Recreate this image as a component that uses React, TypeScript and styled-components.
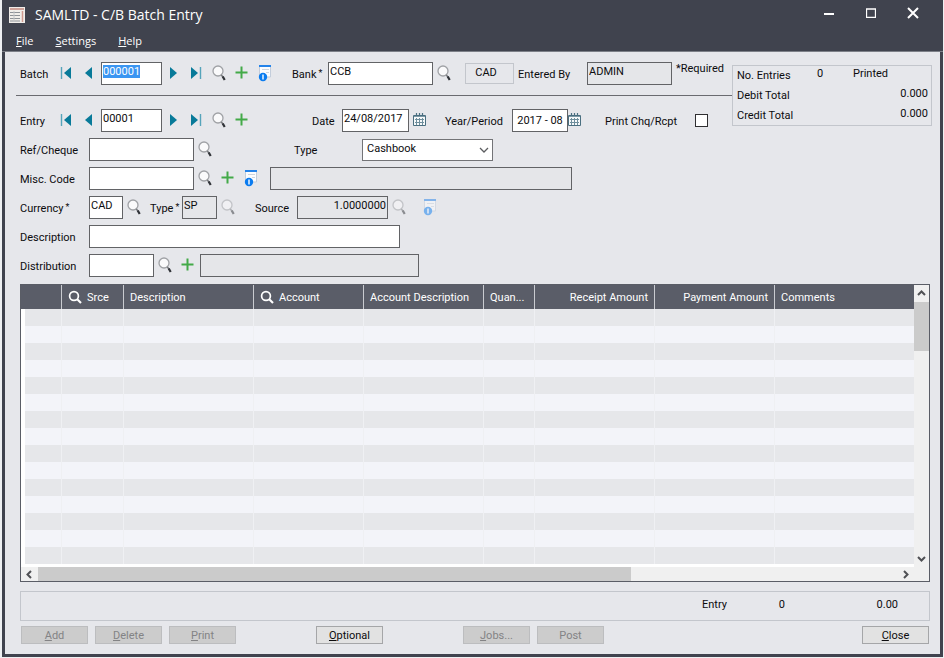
import React, { useEffect, useRef } from 'react';
import styled, { createGlobalStyle } from 'styled-components';

const Global = createGlobalStyle`
  * { box-sizing: border-box; }
  body {
    margin: 0;
    background: #eef0f2;
    color: #0c0c0e;
    font: 11px/14px Roboto, "Liberation Sans", sans-serif;
  }
  button, input, select { font: inherit; color: inherit; margin: 0; }
`;

const Window = styled.div`
  margin: 0 1px 0 2px;
  background: #e6e7eb;
  border: solid #40434e;
  border-width: 0 3px 3px;
`;

const Chrome = styled.header`
  background: #40434e;
  color: #fff;
  margin: 0 -3px;
  border-bottom: 1px solid #7d8088;
  font-family: "Open Sans", "Noto Sans", sans-serif;
`;

const TitleBar = styled.div`
  display: flex;
  align-items: center;
  height: 29px;
  padding: 0 16px 0 7px;
`;

const Title = styled.h1`
  flex: 1;
  margin: 0 0 0 10px;
  font-size: 14px;
  line-height: 20px;
  font-weight: 400;
`;

const CaptionButton = styled.button`
  display: flex;
  align-items: center;
  justify-content: center;
  width: 42px;
  height: 22px;
  padding: 0 0 4px;
  border: 0;
  background: none;
  &:last-child { width: 28px; margin-left: 7px; }
`;

const MenuBar = styled.nav`
  display: flex;
  gap: 22px;
  height: 22px;
  padding: 1px 14px 0;
`;

const MenuItem = styled.button`
  padding: 0;
  border: 0;
  background: none;
  font-size: 11px;
  line-height: 18px;
`;

const Body = styled.main`
  padding: 0 10px 10px 15px;
`;

const Top = styled.div`
  display: flex;
  align-items: flex-start;
  margin: 0 -2px 6px -4px;
`;

const TopFields = styled.div`
  flex: 1;
  padding-top: 10px;
`;

const Row = styled.div`
  display: flex;
  align-items: center;
  height: 23px;
  padding-left: 4px;
  white-space: nowrap;
`;

const Rule = styled.hr`
  margin: 10px 0 13px;
  border: 0;
  border-top: 1px solid #6a6b70;
`;

const Fields = styled.div`
  display: grid;
  gap: 6px;
  margin-left: -4px;
`;

const Label = styled.label<{ $w: number; $ml?: number }>`
  flex: none;
  width: ${p => p.$w}px;
  margin-left: ${p => p.$ml ?? 0}px;
  padding-top: 2px;
  sup { font-size: 9px; line-height: 1px; margin-left: 2px; vertical-align: 2px; }
`;

const Field = styled.input<{ $w: number; $ml?: number; $middle?: boolean; $right?: boolean }>`
  flex: none;
  width: ${p => p.$w}px;
  height: 23px;
  margin-left: ${p => p.$ml ?? 0}px;
  padding: ${p => (p.$middle ? '0 3px' : '0 1px 4px')};
  border: 1px solid #626366;
  border-radius: 0;
  outline: none;
  background: #fff;
  text-align: ${p => (p.$right ? 'right' : p.$middle ? 'center' : 'left')};
  &:read-only { background: #e5e6e9; }
  &::selection { background: #3b96f2; color: #fff; }
`;

const CurrencyTag = styled.output`
  flex: none;
  width: 49px;
  height: 21px;
  margin: 0 4px 0 9px;
  border: 1px solid #c3c6cc;
  line-height: 18px;
  text-align: center;
  padding-right: 7px;
`;

const Required = styled.span`
  align-self: flex-start;
  margin-left: 4px;
`;

const IconButton = styled.button<{ $narrow?: boolean; $ml?: number }>`
  flex: none;
  display: flex;
  align-items: center;
  justify-content: center;
  width: ${p => (p.$narrow ? 15 : 23)}px;
  height: 23px;
  margin-left: ${p => p.$ml ?? 0}px;
  padding: 0 2px 2px 0;
  border: 0;
  background: none;
  &:disabled { opacity: 0.5; }
  svg { flex: none; }
`;

const Check = styled.input`
  appearance: none;
  width: 13px;
  height: 13px;
  margin: 0;
  border: 1px solid #2f2f31;
  background: #fff;
`;

const SelectBox = styled.span`
  position: relative;
  display: flex;
  svg { position: absolute; right: 4px; top: 8px; pointer-events: none; }
`;

const Select = styled.select`
  appearance: none;
  width: 131px;
  height: 22px;
  padding: 0 20px 1px 4px;
  border: 1px solid #737477;
  border-radius: 0;
  background: #fff;
`;

const Totals = styled.section`
  flex: none;
  display: grid;
  grid-template-columns: 76px 40px 1fr;
  grid-template-rows: 20px 20px 18px;
  width: 200px;
  margin-top: 13px;
  padding: 1px 3px 0 4px;
  border: 1px solid #c3c6cc;
`;

const TotalName = styled.span`
  padding-top: 2px;
`;

const TotalCount = styled.span`
  padding-left: 4px;
`;

const TotalValue = styled.span`
  grid-column: 2 / 4;
  text-align: right;
`;

const GridFrame = styled.section`
  display: grid;
  grid-template-columns: 1fr 15px;
  margin-top: 7px;
  border: 1px solid #5a5d66;
  background: #fff;
`;

const Table = styled.table`
  width: 100%;
  table-layout: fixed;
  border-collapse: separate;
  border-spacing: 0;
  margin-bottom: 3px;
`;

const Th = styled.th<{ $right?: boolean }>`
  height: 24px;
  padding: 1px 6px 0;
  background: #5a5d68;
  color: #fff;
  font-weight: 400;
  text-align: ${p => (p.$right ? 'right' : 'left')};
  white-space: nowrap;
  overflow: hidden;
  & + & { border-left: 1px solid #c9cbd0; }
  svg { vertical-align: -3px; margin-right: 5px; }
`;

const Tr = styled.tr`
  background: #f3f4f9;
  &:nth-child(odd) { background: #e6e7ea; }
`;

const Td = styled.td`
  height: 17px;
  padding: 0;
  &:first-child { border-left: 4px solid #fff; }
  & + & { border-left: 1px solid #eff0f3; }
`;

const VScroll = styled.div`
  display: flex;
  flex-direction: column;
  align-items: center;
  background: #f0f0f0;
`;

const VThumb = styled.div`
  width: 100%;
  height: 49px;
  margin-bottom: auto;
  background: #cbcbcb;
`;

const HScroll = styled.div`
  grid-column: 1 / 3;
  display: grid;
  grid-template-columns: 17px 1fr 32px;
  background: #f0f0f0;
`;

const HThumb = styled.div`
  width: 69%;
  height: 14px;
  background: #cbcbcb;
`;

const Arrow = styled.button<{ $side?: boolean }>`
  flex: none;
  display: flex;
  align-items: center;
  justify-content: center;
  width: ${p => (p.$side ? 17 : 15)}px;
  height: ${p => (p.$side ? 14 : 17)}px;
  padding: 0;
  border: 0;
  background: #f0f0f0;
`;

const Summary = styled.section`
  display: flex;
  justify-content: flex-end;
  height: 30px;
  margin: 9px 0 5px;
  padding: 6px 31px 0 0;
  border: 1px solid #c3c6cc;
`;

const SummaryCell = styled.span<{ $w: number }>`
  width: ${p => p.$w}px;
  text-align: right;
  &:first-child { text-align: left; }
`;

const Buttons = styled.div`
  display: flex;
  gap: 7px;
  padding: 0 1px;
`;

const Push = styled.button<{ $ml?: number; $end?: boolean }>`
  width: 67px;
  height: 18px;
  margin-left: ${p => (p.$end ? 'auto' : `${p.$ml ?? 0}px`)};
  padding: 1px 0 0;
  border: 1px solid #a5a6a8;
  background: #e2e2e2;
  line-height: 14px;
  &:disabled { border-color: #bcbdbf; background: #cccccc; color: #838385; }
`;

const First = () => (
  <svg width="12" height="12"><path d="M1.5 0v12" stroke="#55a4ba" strokeWidth="1.4" /><path d="M11 0v12L4 6z" fill="#087a99" /></svg>
);
const Prev = () => <svg width="10" height="12"><path d="M8 0v12L1 6z" fill="#087a99" /></svg>;
const Next = () => <svg width="10" height="12"><path d="M2 0v12l7-6z" fill="#087a99" /></svg>;
const Last = () => (
  <svg width="12" height="12"><path d="M10.5 0v12" stroke="#55a4ba" strokeWidth="1.4" /><path d="M1 0v12l7-6z" fill="#087a99" /></svg>
);
const Lens = () => (
  <svg width="16" height="18" fill="none">
    <circle cx="7" cy="7" r="5" fill="#fafafb" stroke="#a0a2a6" strokeWidth="1.3" />
    <path d="M10.3 11l2 2.500" stroke="#77797d" strokeWidth="1.5" />
    <path d="M11.700 12.500l2 3.500" stroke="#303338" strokeWidth="2.200" />
  </svg>
);
const Plus = () => <svg width="13" height="13"><path d="M6.5 .5v12M.5 6.5h12" stroke="#43aa48" strokeWidth="2" /></svg>;
const Info = () => (
  <svg width="14" height="18">
    <path d="M1.5 2.500h11v10.500h-11z" fill="#fbfcfe" stroke="#c3cddb" />
    <path d="M1 1h12v2H1z" fill="#2483ea" />
    <path d="M4 5.500h7M8 8.500h3" stroke="#ccd4df" />
    <circle cx="5" cy="13" r="4.200" fill="#0b7cf0" />
    <path d="M5 10.500v5" stroke="#fff" strokeWidth="1.4" />
  </svg>
);
const Calendar = () => (
  <svg width="13" height="13" fill="none" stroke="#4a6f80">
    <path d="M.5 2.500h12v10H.5z" fill="#f6f9fa" />
    <path d="M1 3h11" strokeWidth="1.400" />
    <path d="M3.5 0v3M6.5 0v3M9.5 0v3" strokeWidth="1.200" />
    <path d="M2 6.500h9M2 9.500h9M3.5 5v7M6.5 5v7M9.5 5v7" stroke="#6f8f9d" />
  </svg>
);
const HeadLens = () => (
  <svg width="14" height="14" fill="none" stroke="#fff"><circle cx="6" cy="6" r="4.400" strokeWidth="1.700" /><path d="M9 9l4 4" strokeWidth="2.200" /></svg>
);
const arrows = { up: 'M1 6l3.500-3.500L8 6', down: 'M1 3l3.500 3.500L8 3', left: 'M6 1L2.500 4.500 6 8', right: 'M3 1l3.500 3.500L3 8' };
const Chevron = ({ to }: { to: keyof typeof arrows }) => (
  <svg width="9" height="9" fill="none"><path d={arrows[to]} stroke="#505155" strokeWidth="2" /></svg>
);

const nav = [['First', First], ['Previous', Prev]] as const;
const navAfter = [['Next', Next], ['Last', Last], ['Find', Lens], ['New', Plus]] as const;

const columns: { name: string; w?: number; right?: boolean; lens?: boolean }[] = [
  { name: '', w: 40 },
  { name: 'Srce', w: 62, lens: true },
  { name: 'Description', w: 130 },
  { name: 'Account', w: 110, lens: true },
  { name: 'Account Description', w: 120 },
  { name: 'Quan...', w: 51 },
  { name: 'Receipt Amount', w: 120, right: true },
  { name: 'Payment Amount', w: 120, right: true },
  { name: 'Comments' },
];

export default function App() {
  const batch = useRef<HTMLInputElement>(null);
  useEffect(() => {
    batch.current?.focus();
    batch.current?.select();
  }, []);

  return (
    <>
      <Global />
      <Window>
        <Chrome>
          <TitleBar>
            <svg width="16" height="16">
              <path d="M0 0h16v16H0z" fill="#f1eeea" />
              <path d="M1 2h14" stroke="#c58a7f" strokeWidth="1.5" />
              <path d="M1 5.500h10M1 8.500h10M1 11.500h10M1 14h10" stroke="#8e9297" />
              <path d="M13.5 4v11" stroke="#d09a8f" strokeWidth="1.500" />
              <path d="M5 4v11" stroke="#c4c6c8" />
            </svg>
            <Title>SAMLTD - C/B Batch Entry</Title>
            <CaptionButton aria-label="Minimize"><svg width="10" height="10"><path d="M0 6h10" stroke="#fff" strokeWidth="2" /></svg></CaptionButton>
            <CaptionButton aria-label="Maximize"><svg width="10" height="10"><path d="M.5 1h9v8.500h-9z" fill="none" stroke="#fff" strokeWidth="1.3" /></svg></CaptionButton>
            <CaptionButton aria-label="Close window"><svg width="12" height="12"><path d="M1 1l10 10M11 1L1 11" stroke="#fff" strokeWidth="2" /></svg></CaptionButton>
          </TitleBar>
          <MenuBar>
            <MenuItem><u>F</u>ile</MenuItem>
            <MenuItem><u>S</u>ettings</MenuItem>
            <MenuItem><u>H</u>elp</MenuItem>
          </MenuBar>
        </Chrome>
        <Body>
          <Top>
            <TopFields>
              <Row>
                <Label $w={35} htmlFor="batch">Batch</Label>
                {nav.map(([n, I]) => <IconButton key={n} aria-label={`${n} batch`}><I /></IconButton>)}
                <Field id="batch" ref={batch} $w={61} defaultValue="000001" />
                {navAfter.map(([n, I]) => <IconButton key={n} aria-label={`${n} batch`}><I /></IconButton>)}
                <IconButton aria-label="Batch information"><Info /></IconButton>
                <Label $w={36} $ml={15} htmlFor="bank">Bank<sup>*</sup></Label>
                <Field id="bank" $w={105} defaultValue="CCB" />
                <IconButton aria-label="Find bank"><Lens /></IconButton>
                <CurrencyTag>CAD</CurrencyTag>
                <Label $w={69} htmlFor="by">Entered By</Label>
                <Field id="by" $w={85} readOnly value="ADMIN" />
                <Required>*Required</Required>
              </Row>
              <Rule />
              <Row>
                <Label $w={35} htmlFor="entry">Entry</Label>
                {nav.map(([n, I]) => <IconButton key={n} aria-label={`${n} entry`}><I /></IconButton>)}
                <Field id="entry" $w={61} defaultValue="00001" />
                {navAfter.map(([n, I]) => <IconButton key={n} aria-label={`${n} entry`}><I /></IconButton>)}
                <Label $w={30} $ml={58} htmlFor="date">Date</Label>
                <Field id="date" $w={67} defaultValue="24/08/2017" />
                <IconButton aria-label="Pick date"><Calendar /></IconButton>
                <Label $w={67} $ml={13} htmlFor="period">Year/Period</Label>
                <Field id="period" $w={56} $middle defaultValue="2017 - 08" />
                <IconButton $narrow aria-label="Pick period"><Calendar /></IconButton>
                <Label $w={90} $ml={22} htmlFor="chq">Print Chq/Rcpt</Label>
                <Check id="chq" type="checkbox" />
              </Row>
            </TopFields>
            <Totals>
              <TotalName>No. Entries</TotalName><TotalCount>0</TotalCount><span>Printed</span>
              <TotalName>Debit Total</TotalName><TotalValue>0.000</TotalValue>
              <TotalName>Credit Total</TotalName><TotalValue>0.000</TotalValue>
            </Totals>
          </Top>
          <Fields>
            <Row>
              <Label $w={69} htmlFor="ref">Ref/Cheque</Label>
              <Field id="ref" $w={105} />
              <IconButton aria-label="Find reference"><Lens /></IconButton>
              <Label $w={68} $ml={77} htmlFor="type">Type</Label>
              <SelectBox>
                <Select id="type"><option>Cashbook</option></Select>
                <svg width="10" height="7" fill="none"><path d="M1 1l4 4 4-4" stroke="#5c5d60" strokeWidth="1.3" /></svg>
              </SelectBox>
            </Row>
            <Row>
              <Label $w={69} htmlFor="misc">Misc. Code</Label>
              <Field id="misc" $w={105} />
              <IconButton aria-label="Find code"><Lens /></IconButton>
              <IconButton aria-label="New code"><Plus /></IconButton>
              <IconButton aria-label="Code information"><Info /></IconButton>
              <Field aria-label="Code name" $w={302} $ml={7} readOnly />
            </Row>
            <Row>
              <Label $w={69} htmlFor="cur">Currency<sup>*</sup></Label>
              <Field id="cur" $w={34} defaultValue="CAD" />
              <IconButton aria-label="Find currency"><Lens /></IconButton>
              <Label $w={32} $ml={4} htmlFor="rate">Type<sup>*</sup></Label>
              <Field id="rate" $w={35} readOnly value="SP" />
              <IconButton disabled aria-label="Find rate type"><Lens /></IconButton>
              <Label $w={42} $ml={15} htmlFor="source">Source</Label>
              <Field id="source" $w={91} $right readOnly value="1.0000000" />
              <IconButton disabled aria-label="Find source"><Lens /></IconButton>
              <IconButton $ml={8} disabled aria-label="Rate information"><Info /></IconButton>
            </Row>
            <Row>
              <Label $w={69} htmlFor="desc">Description</Label>
              <Field id="desc" $w={311} />
            </Row>
            <Row>
              <Label $w={69} htmlFor="dist">Distribution</Label>
              <Field id="dist" $w={65} />
              <IconButton aria-label="Find distribution"><Lens /></IconButton>
              <IconButton aria-label="New distribution"><Plus /></IconButton>
              <Field aria-label="Distribution name" $w={219} readOnly />
            </Row>
          </Fields>
          <GridFrame>
            <Table>
              <colgroup>{columns.map(c => <col key={c.name} width={c.w} />)}</colgroup>
              <thead>
                <tr>
                  {columns.map(c => <Th key={c.name} $right={c.right}>{c.lens && <HeadLens />}{c.name}</Th>)}
                </tr>
              </thead>
              <tbody>
                {Array.from({ length: 15 }, (_, r) => (
                  <Tr key={r}>{columns.map(c => <Td key={c.name} />)}</Tr>
                ))}
              </tbody>
            </Table>
            <VScroll>
              <Arrow aria-label="Scroll up"><Chevron to="up" /></Arrow>
              <VThumb />
              <Arrow aria-label="Scroll down"><Chevron to="down" /></Arrow>
            </VScroll>
            <HScroll>
              <Arrow $side aria-label="Scroll left"><Chevron to="left" /></Arrow>
              <HThumb />
              <Arrow $side aria-label="Scroll right"><Chevron to="right" /></Arrow>
            </HScroll>
          </GridFrame>
          <Summary>
            <SummaryCell $w={50}>Entry</SummaryCell>
            <SummaryCell $w={33}>0</SummaryCell>
            <SummaryCell $w={113}>0.00</SummaryCell>
          </Summary>
          <Buttons>
            <Push disabled><u>A</u>dd</Push>
            <Push disabled><u>D</u>elete</Push>
            <Push disabled><u>P</u>rint</Push>
            <Push $ml={73}><u>O</u>ptional</Push>
            <Push $ml={73} disabled><u>J</u>obs...</Push>
            <Push disabled>Post</Push>
            <Push $end><u>C</u>lose</Push>
          </Buttons>
        </Body>
      </Window>
    </>
  );
}
